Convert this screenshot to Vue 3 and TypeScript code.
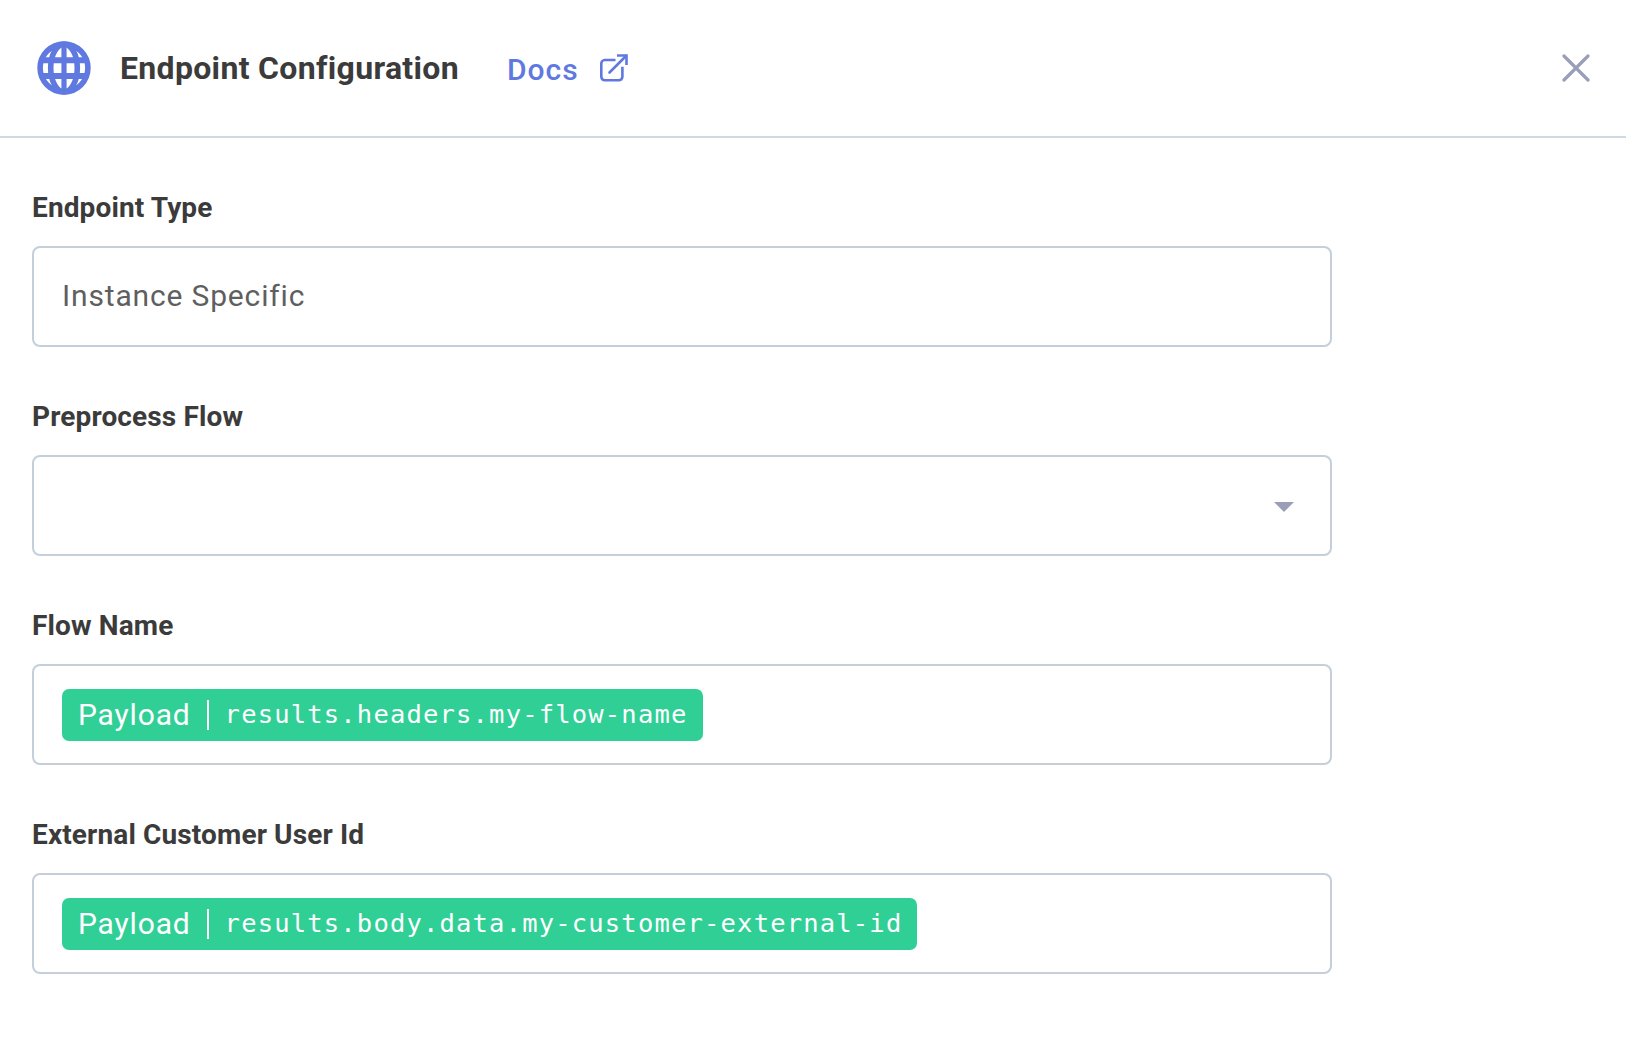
<script setup lang="ts">
interface Token {
  source: string
  path: string
}

interface Field {
  label: string
  kind: 'text' | 'select' | 'token'
  value?: string
  token?: Token
}

const fields: Field[] = [
  { label: 'Endpoint Type', kind: 'text', value: 'Instance Specific' },
  { label: 'Preprocess Flow', kind: 'select' },
  { label: 'Flow Name', kind: 'token', token: { source: 'Payload', path: 'results.headers.my-flow-name' } },
  {
    label: 'External Customer User Id',
    kind: 'token',
    token: { source: 'Payload', path: 'results.body.data.my-customer-external-id' },
  },
]
</script>

<template>
  <section class="panel">
    <header class="header">
      <svg class="globe" viewBox="0 0 54 54" fill="none" stroke="currentColor" stroke-width="5.6">
        <circle cx="27" cy="27" r="23.9" />
        <ellipse cx="27" cy="27" rx="13.3" ry="23.9" />
        <path d="M27 2v50" stroke-width="5.2" />
        <path d="M5 19.200h44M5 34.900h44" stroke-width="6" />
      </svg>
      <h1 class="title">Endpoint Configuration</h1>
      <a class="docs">
        <span class="docs-text">Docs</span>
        <svg class="external" viewBox="0 0 28 28" fill="none" stroke="currentColor" stroke-width="2.6">
          <path d="M15.500 6H4.700A3.500 3.500 0 0 0 1.300 9.500V22.800A3.500 3.500 0 0 0 4.700 26.300H18.900A3.500 3.500 0 0 0 22.400 22.800V12.800" />
          <path d="M9.500 18.500L26 2" stroke-linecap="round" />
          <path d="M17 1.500H26.500V11" />
        </svg>
      </a>
      <button class="close" aria-label="Close">
        <svg viewBox="0 0 28 28" fill="none" stroke="currentColor" stroke-width="3.2" stroke-linecap="round">
          <path d="M2 2L26 26M26 2L2 26" />
        </svg>
      </button>
    </header>

    <main class="form">
      <div v-for="field in fields" :key="field.label" class="field">
        <div class="label">{{ field.label }}</div>
        <div class="box">
          <span v-if="field.kind === 'text'" class="value">{{ field.value }}</span>
          <svg v-else-if="field.kind === 'select'" class="caret" viewBox="0 0 20 10">
            <path d="M0 0H20L10 10Z" fill="currentColor" />
          </svg>
          <div v-else-if="field.token" class="token">
            <span class="source">{{ field.token.source }}</span>
            <span class="divider"></span>
            <span class="path">{{ field.token.path }}</span>
          </div>
        </div>
      </div>
    </main>
  </section>
</template>

<style>
body {
  background: #fff;
}
</style>

<style scoped>
.panel {
  box-sizing: border-box;
  height: 1038px;
  overflow: hidden;
  background: #fff;
  color: #3b3b3b;
  font-family: Roboto, sans-serif;
}
.header {
  box-sizing: border-box;
  display: flex;
  align-items: center;
  height: 138px;
  padding: 0 36px 0 37px;
  border-bottom: 2px solid #d0d8e1;
}
.globe {
  width: 54px;
  height: 54px;
  color: #5f79e1;
}
.title {
  margin: 0 0 0 29px;
  font-size: 32px;
  line-height: 40px;
  font-weight: 700;
  letter-spacing: 0.32px;
  white-space: nowrap;
}
.docs {
  display: flex;
  align-items: center;
  margin-left: 48px;
  color: #5f79e1;
}
.docs-text {
  padding-top: 4px;
  font-size: 30px;
  line-height: 36px;
  font-weight: 500;
  letter-spacing: 1px;
}
.external {
  width: 28px;
  height: 28px;
  margin-left: 21px;
}
.close {
  display: flex;
  margin-left: auto;
  padding: 0;
  border: 0;
  background: none;
  color: #9a9eb9;
}
.close svg {
  width: 28px;
  height: 28px;
}
.form {
  width: 1300px;
  padding: 53px 0 0 32px;
}
.field {
  height: 209px;
}
.label {
  height: 55px;
  font-size: 28px;
  line-height: 33px;
  font-weight: 700;
  letter-spacing: 0.13px;
}
.box {
  box-sizing: border-box;
  display: flex;
  align-items: center;
  height: 101px;
  padding: 0 36px 0 28px;
  border: 2px solid #c4cfda;
  border-radius: 8px;
}
.value {
  color: #5f5f5f;
  font-size: 30px;
  line-height: 36px;
  letter-spacing: 0.84px;
  padding-bottom: 2px;
}
.caret {
  width: 20px;
  height: 10px;
  margin: 2px 0 0 auto;
  color: #9a9eb9;
}
.token {
  display: flex;
  align-items: center;
  box-sizing: border-box;
  height: 52px;
  padding: 0 15px 0 16px;
  border-radius: 7px;
  background: #30cf96;
  color: #fff;
}
.source {
  font-size: 30px;
  line-height: 36px;
  letter-spacing: 0.84px;
}
.divider {
  width: 2px;
  height: 30px;
  margin: 0 16px;
  background: #fff;
}
.path {
  padding-bottom: 2px;
  font-family: 'DejaVu Sans Mono', monospace;
  font-size: 25.5px;
  line-height: 30px;
  letter-spacing: 1.18px;
  white-space: nowrap;
}
</style>
